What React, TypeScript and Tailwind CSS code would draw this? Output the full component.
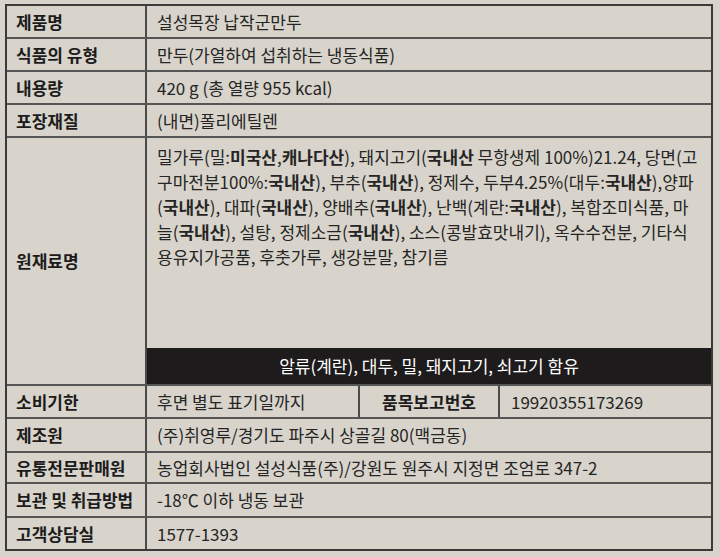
const font = { fontFamily: '"Noto Sans CJK KR", "Noto Sans", sans-serif' };

type Row = { label: string; value: React.ReactNode; h: string };

function B({ children }: { children: React.ReactNode }) {
  return <span className="font-bold">{children}</span>;
}

function Label({ children }: { children: React.ReactNode }) {
  return (
    <div className="flex w-[140px] shrink-0 items-center border-r-2 border-[#4a4a4a] pl-[9px] text-[17px] font-bold text-[#1c1c1c]">
      {children}
    </div>
  );
}

export default function App() {
  const top: Row[] = [
    { label: '제품명', value: '설성목장 납작군만두', h: 'h-[33px]' },
    { label: '식품의 유형', value: '만두(가열하여 섭취하는 냉동식품)', h: 'h-[33px]' },
    { label: '내용량', value: '420 g (총 열량 955 kcal)', h: 'h-[33px]' },
    { label: '포장재질', value: '(내면)폴리에틸렌', h: 'h-[33px]' },
  ];
  const bottom: Row[] = [
    { label: '제조원', value: '(주)취영루/경기도 파주시 상골길 80(맥금동)', h: 'h-[34px]' },
    { label: '유통전문판매원', value: '농업회사법인 설성식품(주)/강원도 원주시 지정면 조엄로 347-2', h: 'h-[31px]' },
    { label: '보관 및 취급방법', value: '-18℃ 이하 냉동 보관', h: 'h-[34px]' },
    { label: '고객상담실', value: '1577-1393', h: 'h-[31px]' },
  ];

  return (
    <div className="min-h-[557px] w-[720px] bg-[#d8d4cb] pl-[5px] pt-[4px] text-[#252525]" style={font}>
      <div className="w-[708px] border-2 border-[#3a3a3a]">
        {top.map((r) => (
          <div key={r.label} className={`flex ${r.h} border-b-2 border-[#555]`}>
            <Label>{r.label}</Label>
            <div className="flex flex-1 items-center pl-[10px] text-[17px]">{r.value}</div>
          </div>
        ))}

        <div className="flex h-[248px] border-b-2 border-[#555]">
          <Label>원재료명</Label>
          <div className="flex flex-1 flex-col">
            {/* line breaks follow the printed label */}
            <div className="flex-1 whitespace-nowrap pl-[10px] pt-[6px] text-[17px] leading-[25px]">
              밀가루(밀:<B>미국산</B>,<B>캐나다산</B>), 돼지고기(<B>국내산</B> 무항생제 100%)21.24, 당면(고
              <br />
              구마전분100%:<B>국내산</B>), 부추(<B>국내산</B>), 정제수, 두부4.25%(대두:<B>국내산</B>),양파
              <br />
              (<B>국내산</B>), 대파(<B>국내산</B>), 양배추(<B>국내산</B>), 난백(계란:<B>국내산</B>), 복합조미식품, 마
              <br />
              늘(<B>국내산</B>), 설탕, 정제소금(<B>국내산</B>), 소스(콩발효맛내기), 옥수수전분, 기타식
              <br />
              용유지가공품, 후춧가루, 생강분말, 참기름
            </div>
            <div className="flex h-[36px] items-center justify-center bg-[#1e1b1c] text-[17px] text-white">
              알류(계란), 대두, 밀, 돼지고기, 쇠고기 함유
            </div>
          </div>
        </div>

        <div className="flex h-[33px] border-b-2 border-[#555]">
          <Label>소비기한</Label>
          <div className="flex w-[213px] items-center border-r-2 border-[#4a4a4a] pl-[10px] text-[17px]">후면 별도 표기일까지</div>
          <div className="flex w-[140px] items-center justify-center border-r-2 border-[#4a4a4a] text-[17px] font-bold text-[#1c1c1c]">품목보고번호</div>
          <div className="flex flex-1 items-center pl-[11px] text-[17px]">19920355173269</div>
        </div>

        {bottom.map((r, i) => (
          <div key={r.label} className={`flex ${r.h} ${i < bottom.length - 1 ? 'border-b-2 border-[#555]' : ''}`}>
            <Label>{r.label}</Label>
            <div className="flex flex-1 items-center pl-[10px] text-[17px]">{r.value}</div>
          </div>
        ))}
      </div>
    </div>
  );
}
